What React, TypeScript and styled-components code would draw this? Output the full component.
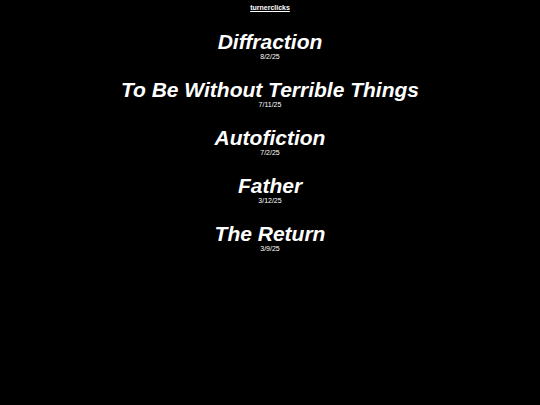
import styled, { createGlobalStyle } from "styled-components";

const GlobalStyle = createGlobalStyle`
  html, body {
    margin: 0;
    padding: 0;
    background: #000;
    color: #fff;
    font-family: "Liberation Sans", Arial, sans-serif;
  }
`;

const Page = styled.div`
  display: flex;
  flex-direction: column;
  align-items: center;
  padding-top: 4px;
`;

const SiteLink = styled.a`
  font-size: 7px;
  font-weight: bold;
  color: #fff;
  text-decoration: underline;
  line-height: 8px;
`;

const PostList = styled.div`
  display: flex;
  flex-direction: column;
  align-items: center;
  margin-top: 19px;
  gap: 18px;
`;

const Post = styled.div`
  display: flex;
  flex-direction: column;
  align-items: center;
`;

const Title = styled.div`
  font-size: 21px;
  font-weight: bold;
  font-style: italic;
  line-height: 21px;
`;

const PostDate = styled.div`
  font-size: 7px;
  line-height: 8px;
  margin-top: 1px;
`;

const posts = [
  { title: "Diffraction", date: "8/2/25" },
  { title: "To Be Without Terrible Things", date: "7/11/25" },
  { title: "Autofiction", date: "7/2/25" },
  { title: "Father", date: "3/12/25" },
  { title: "The Return", date: "3/9/25" },
];

export default function App() {
  return (
    <>
      <GlobalStyle />
      <Page>
        <SiteLink href="#">turnerclicks</SiteLink>
        <PostList>
          {posts.map((p) => (
            <Post key={p.title}>
              <Title>{p.title}</Title>
              <PostDate>{p.date}</PostDate>
            </Post>
          ))}
        </PostList>
      </Page>
    </>
  );
}
